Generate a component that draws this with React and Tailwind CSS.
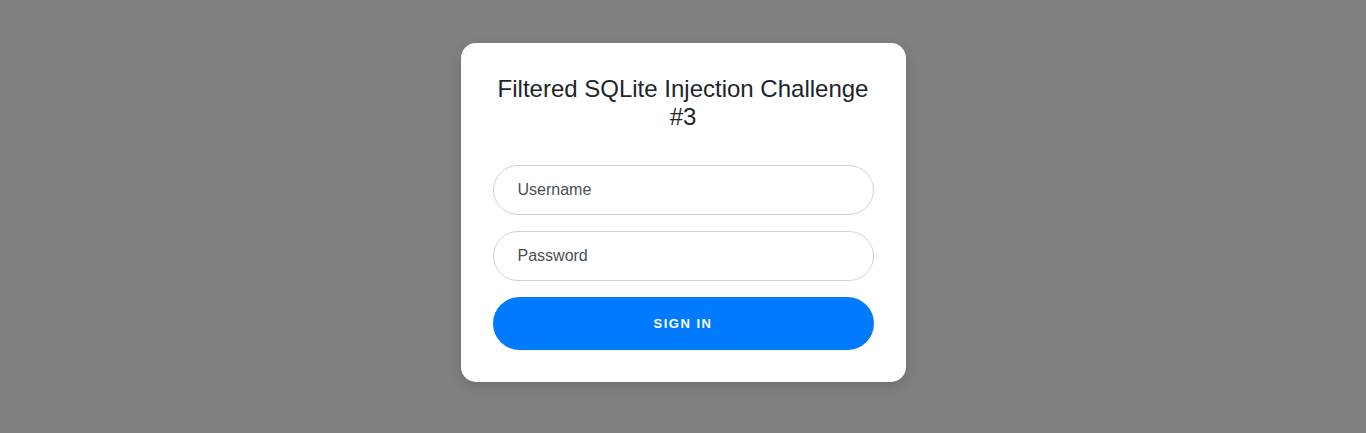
import React, { useState } from "react";

const App = () => {
  const [username, setUsername] = useState("");
  const [password, setPassword] = useState("");

  return (
    <div className="min-h-[433px] bg-[#808080] flex justify-center pt-[43px] font-['Liberation_Sans',Arial,sans-serif]">
      <div className="w-[445px] h-[339px] bg-white rounded-[15px] p-8 shadow-[0_4px_12px_rgba(0,0,0,0.15)]">
        <h1 className="text-[24px] leading-[28px] text-center text-[#212529] font-normal">
          Filtered SQLite Injection Challenge #3
        </h1>

        <form className="mt-[34px] flex flex-col" onSubmit={(e) => e.preventDefault()}>
          <input
            type="text"
            placeholder="Username"
            value={username}
            onChange={(e) => setUsername(e.target.value)}
            className="h-[50px] w-full rounded-full border border-[#ced4da] px-6 text-base text-[#495057] placeholder:text-[#495057] outline-none"
          />
          <input
            type="password"
            placeholder="Password"
            value={password}
            onChange={(e) => setPassword(e.target.value)}
            className="mt-4 h-[50px] w-full rounded-full border border-[#ced4da] px-6 text-base text-[#495057] placeholder:text-[#495057] outline-none"
          />
          <button
            type="submit"
            className="mt-4 h-[53px] w-full rounded-full bg-[#007bff] text-white text-[13px] font-bold tracking-[1.5px] uppercase"
          >
            Sign in
          </button>
        </form>
      </div>
    </div>
  );
};

export default App;
